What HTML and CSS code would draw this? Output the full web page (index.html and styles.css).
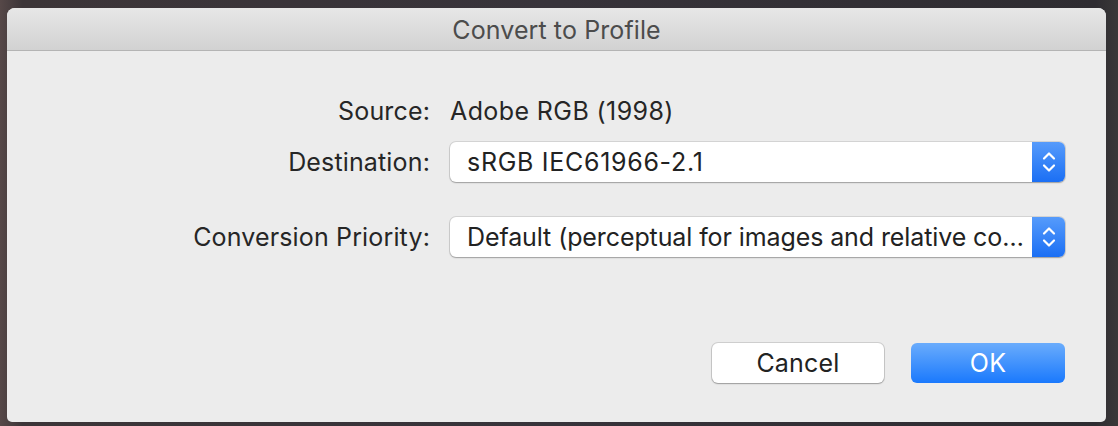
FILE: index.html
```html
<!DOCTYPE html>
<html>
<head>
<meta charset="utf-8">
<link rel="stylesheet" href="styles.css">
</head>
<body>
<div class="window">
  <div class="titlebar">Convert to Profile</div>
  <div class="content">
    <div class="row row-source">
      <div class="label">Source:</div>
      <div class="value">Adobe RGB (1998)</div>
    </div>
    <div class="row row-dest">
      <div class="label">Destination:</div>
      <div class="popup">
        <span class="popup-text popup-text-wide">sRGB IEC61966-2.1</span>
        <span class="popup-arrows">
          <svg width="14" height="22" viewBox="0 0 14 22"><path d="M2 7.5 L7 2.5 L12 7.5 M2 14.5 L7 19.5 L12 14.5" fill="none" stroke="#fff" stroke-width="2.2" stroke-linecap="round" stroke-linejoin="round"/></svg>
        </span>
      </div>
    </div>
    <div class="row row-prio">
      <div class="label">Conversion Priority:</div>
      <div class="popup">
        <span class="popup-text">Default (perceptual for images and relative co…</span>
        <span class="popup-arrows">
          <svg width="14" height="22" viewBox="0 0 14 22"><path d="M2 7.5 L7 2.5 L12 7.5 M2 14.5 L7 19.5 L12 14.5" fill="none" stroke="#fff" stroke-width="2.2" stroke-linecap="round" stroke-linejoin="round"/></svg>
        </span>
      </div>
    </div>
    <div class="buttons">
      <div class="btn btn-cancel">Cancel</div>
      <div class="btn btn-ok">OK</div>
    </div>
  </div>
</div>
</body>
</html>
```

FILE: styles.css
```css
html, body {
  margin: 0;
  padding: 0;
}
body {
  width: 1118px;
  height: 426px;
  overflow: hidden;
  background: linear-gradient(90deg, #564848 0%, #3c3538 2%, #37333a 50%, #2e2c31 98%, #3a3838 100%);
  font-family: Inter, "Noto Sans", sans-serif;
  color: #262626;
}
.window {
  margin: 8px 12px 0 7px;
  width: 1099px;
  height: 414px;
  border-radius: 8px 8px 5px 5px;
  overflow: hidden;
  background: #ececec;
  display: flex;
  flex-direction: column;
}
.titlebar {
  height: 42px;
  border-bottom: 1px solid #b4b4b4;
  background: linear-gradient(#e7e7e7, #d2d2d2);
  color: #4c4c4c;
  font-size: 25px;
  line-height: 44px;
  text-align: center;
  letter-spacing: 0.1px;
}
.content {
  flex: 1;
  padding-top: 40px;
  display: flex;
  flex-direction: column;
}
.row {
  display: grid;
  grid-template-columns: 423px 615px;
  column-gap: 20px;
  align-items: center;
  height: 40px;
  font-size: 25px;
  letter-spacing: 0.15px;
}
.row-dest {
  margin-top: 11px;
}
.row-prio {
  margin-top: 35px;
}
.label {
  text-align: right;
}
.value {
  letter-spacing: 0.4px;
}
.popup {
  height: 40px;
  display: flex;
  align-items: center;
  background: #fff;
  border-radius: 6px;
  box-shadow: 0 0 0 1px rgba(0, 0, 0, 0.1), 0 1px 1.5px rgba(0, 0, 0, 0.25);
  overflow: hidden;
}
.popup-text {
  flex: 1;
  padding-left: 17px;
  white-space: nowrap;
  overflow: hidden;
  color: #222;
  letter-spacing: -0.1px;
}
.popup-text-wide {
  letter-spacing: 0.7px;
}
.popup-arrows {
  width: 33px;
  height: 40px;
  display: flex;
  align-items: center;
  justify-content: center;
  background: linear-gradient(#569bfb, #1b6ff4);
}
.popup-arrows svg {
  display: block;
}
.buttons {
  margin-top: 86px;
  display: flex;
  justify-content: flex-end;
  gap: 27px;
  padding-right: 41px;
}
.btn {
  height: 40px;
  line-height: 40px;
  text-align: center;
  font-size: 25px;
  border-radius: 6px;
  letter-spacing: 0.2px;
}
.btn-cancel {
  width: 172px;
  background: #fff;
  color: #222;
  box-shadow: 0 0 0 1px rgba(0, 0, 0, 0.12), 0 1px 1.5px rgba(0, 0, 0, 0.25);
}
.btn-ok {
  width: 154px;
  color: #fff;
  background: linear-gradient(#6aacfc, #1a79fd);
}
```
